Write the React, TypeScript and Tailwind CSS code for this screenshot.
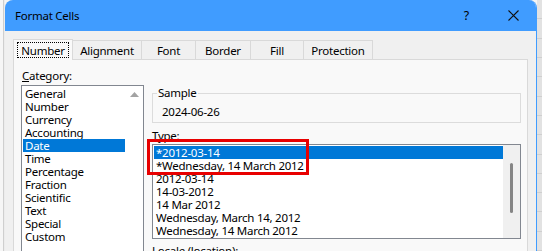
import React from "react";

const categories = [
  "General",
  "Number",
  "Currency",
  "Accounting",
  "Date",
  "Time",
  "Percentage",
  "Fraction",
  "Scientific",
  "Text",
  "Special",
  "Custom",
];

const types = [
  "*2012-03-14",
  "*Wednesday, 14 March 2012",
  "2012-03-14",
  "14-03-2012",
  "14 Mar 2012",
  "Wednesday, March 14, 2012",
  "Wednesday, 14 March 2012",
];

const tabs = [
  { label: "Number", w: "w-[60px]" },
  { label: "Alignment", w: "w-[70px]" },
  { label: "Font", w: "w-[55px]" },
  { label: "Border", w: "w-[56px]" },
  { label: "Fill", w: "w-[54px]" },
  { label: "Protection", w: "w-[70px]" },
];

export default function App() {
  return (
    <div className="relative w-[542px] h-[251px] overflow-hidden flex bg-[#f4f4f4] text-black text-[11.5px] tracking-[-0.25px] leading-[13px] font-['Noto_Sans',sans-serif]">
      {/* left desktop strip */}
      <div className="w-[5px] h-full flex">
        <div className="w-[3px] h-full bg-[#f6f6f6]" />
        <div className="w-[1px] h-full bg-[#cfcfcf]" />
        <div className="w-[1px] h-full bg-[#ececec]" />
      </div>

      {/* window */}
      <div className="w-[532px] h-full flex flex-col rounded-t-[8px] overflow-hidden border-r border-[#3f9cff] bg-[#f0f0f0]">
        {/* title bar */}
        <div className="h-[31px] shrink-0 bg-[#409cff] flex items-center pl-[10px]">
          <span>Format Cells</span>
          <div className="flex-1" />
          <span className="text-[12.5px] mr-[39px]">?</span>
          <svg width="11" height="11" viewBox="0 0 11 11" className="mr-[17px]">
            <path d="M0.5 0.5 L10.5 10.5 M10.5 0.5 L0.5 10.5" stroke="#111" strokeWidth="1.1" />
          </svg>
        </div>

        {/* body */}
        <div className="flex flex-col pl-[8px] pr-[8px] pt-[8px]">
          {/* tabs */}
          <div className="relative z-10 flex items-end h-[20px]">
            {tabs.map((t, i) =>
              i === 0 ? (
                <div
                  key={t.label}
                  className={`${t.w} relative z-10 h-[21px] -mb-px bg-[#f9f9f9] border border-b-0 border-[#d9d9d9] flex items-start justify-center pt-[2px]`}
                >
                  <span className="px-[3px] h-[16px] flex items-center border border-dotted border-black">
                    {t.label}
                  </span>
                </div>
              ) : (
                <div
                  key={t.label}
                  className={`${t.w} -ml-px h-[19px] bg-[#f0f0f0] border border-b-0 border-[#d9d9d9] flex items-center justify-center`}
                >
                  {t.label}
                </div>
              )
            )}
          </div>

          {/* panel */}
          <div className="h-[200px] border border-[#d9d9d9] bg-[#f9f9f9] flex pl-[7px]">
            {/* category column */}
            <div className="flex flex-col pt-[9px]">
              <div className="h-[14px] flex items-center pl-[1px]">
                <span>
                  <span className="underline">C</span>ategory:
                </span>
              </div>
              <div className="mt-[3px] w-[123px] h-[200px] border border-[#828790] bg-white flex">
                <div className="flex-1 flex flex-col pl-[1px] pt-[1px]">
                  {categories.map((c) => (
                    <div
                      key={c}
                      className={`h-[13px] flex items-center pl-[2px] ${
                        c === "Date" ? "bg-[#0078d7] text-white" : ""
                      }`}
                    >
                      {c}
                    </div>
                  ))}
                </div>
                <div className="w-[18px] flex justify-center pt-[6px]">
                  <svg width="9" height="5" viewBox="0 0 9 5">
                    <path d="M0 5 L4.5 0 L9 5 Z" fill="#a3a3a3" />
                  </svg>
                </div>
              </div>
            </div>

            {/* right column */}
            <div className="ml-[8px] w-[369px] flex flex-col pt-[26px]">
              <fieldset className="border border-[#dcdcdc] h-[37px] pl-[8px]">
                <legend className="ml-[-4px] px-[1px] leading-[14px]">Sample</legend>
                <div className="pt-[5px] pl-[1px]">2024-06-26</div>
              </fieldset>

              <div className="mt-[5px] h-[14px] flex items-center">Type:</div>

              <div className="mt-[2px] h-[95px] border border-[#828790] bg-white flex">
                <div className="flex-1 flex flex-col pl-[1px] pt-[1px]">
                  {types.map((t, i) => (
                    <div
                      key={i}
                      className={`h-[13px] flex items-center pl-[2px] whitespace-nowrap ${
                        i === 0 ? "bg-[#0078d7] text-white" : ""
                      }`}
                    >
                      {t}
                    </div>
                  ))}
                </div>
                <div className="w-[17px] bg-[#f0f0f0] flex flex-col items-center pt-[18px]">
                  <div className="w-[3px] h-[50px] rounded-full bg-[#858585]" />
                </div>
              </div>

              <div className="mt-[4px] h-[14px] flex items-center">Locale (location):</div>
            </div>
          </div>
        </div>
      </div>

      {/* right desktop strip */}
      <div className="w-[5px] h-full flex flex-col bg-[#e2e2e2]">
        {Array.from({ length: 13 }).map((_, i) => (
          <div key={i} className="h-[20px] border-b border-[#cfcfcf]" />
        ))}
      </div>

      {/* annotation box */}
      <div className="absolute left-[147px] top-[139px] w-[162px] h-[36px] border-[3px] border-[#e80000] pointer-events-none" />
    </div>
  );
}
